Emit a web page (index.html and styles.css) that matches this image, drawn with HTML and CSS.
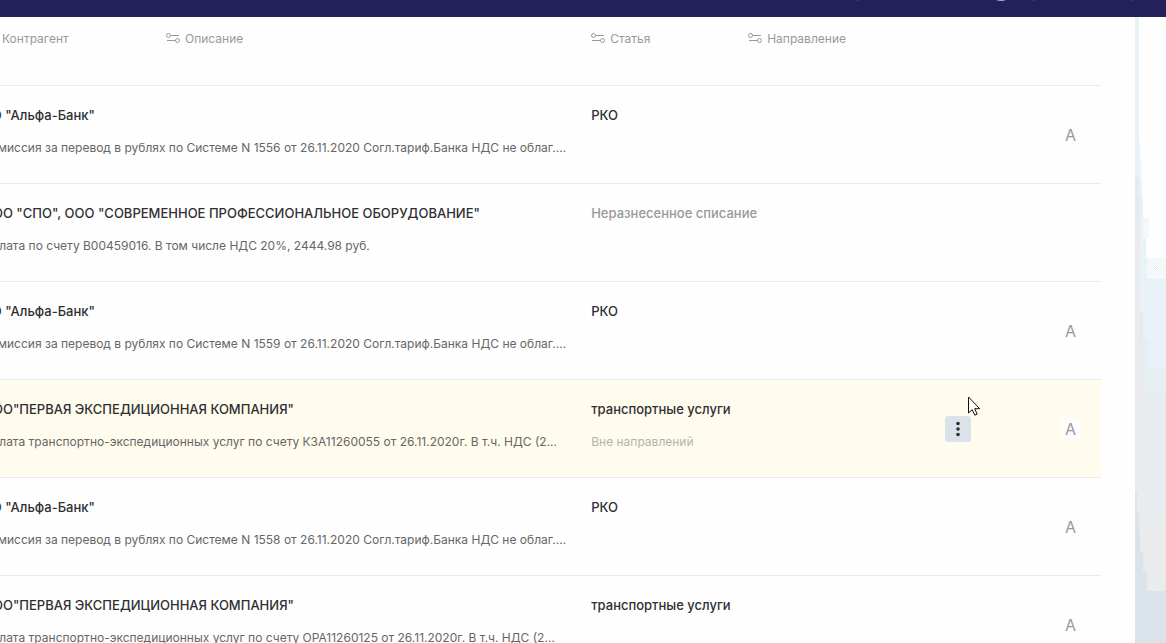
FILE: index.html
```html
<!DOCTYPE html>
<html lang="ru">
<head>
  <meta charset="UTF-8" />
  <meta name="viewport" content="width=device-width, initial-scale=1.0"/>
  <title>Операции</title>
  <link rel="stylesheet" href="styles.css">
</head>
<body>
  <header class="topbar">
    <svg class="topbar-marks" width="276" height="1" viewBox="0 0 276 1" aria-hidden="true">
      <path d="M0 0h1v1H0zM176 0h1v1h-1zM274 0h1v1h-1z" fill="#54517f"/>
      <path d="M140 0h8v1h-8z" fill="#77759a"/>
      <path d="M142 0h4v1h-4z" fill="#a5a4b8"/>
    </svg>
  </header>

  <!-- Icon used in the column headings -->
  <svg class="sprite" aria-hidden="true">
    <symbol id="filter" viewBox="0 0 14 12">
      <g fill="none" stroke="#9a9a9a" stroke-width="1">
        <circle cx="2.5" cy="2.5" r="2"/>
        <path d="M4.5 2.5H13"/>
        <circle cx="11.5" cy="7.5" r="2"/>
        <path d="M1 7.5h8.5"/>
      </g>
    </symbol>
  </svg>

  <div class="page">
    <main class="panel">
      <table class="operations">
        <colgroup>
          <col class="col-party">
          <col class="col-article">
          <col class="col-menu">
          <col class="col-type">
        </colgroup>
        <thead>
          <tr>
            <th scope="col">
              <div class="headings headings-party">
                <span class="heading"><svg class="icon"><use href="#filter"/></svg>Контрагент</span>
                <span class="heading"><svg class="icon"><use href="#filter"/></svg>Описание</span>
              </div>
            </th>
            <th scope="col">
              <div class="headings headings-article">
                <span class="heading"><svg class="icon"><use href="#filter"/></svg>Статья</span>
                <span class="heading"><svg class="icon"><use href="#filter"/></svg>Направление</span>
              </div>
            </th>
            <td></td>
            <td></td>
          </tr>
        </thead>
        <tbody>
          <tr>
            <td>
              <div class="name">АО "Альфа-Банк"</div>
              <div class="note">Комиссия за перевод в рублях по Системе N 1556 от 26.11.2020 Согл.тариф.Банка НДС не облаг.…</div>
            </td>
            <td><div class="name">РКО</div></td>
            <td></td>
            <td class="type"><span class="badge">А</span></td>
          </tr>
          <tr>
            <td>
              <div class="name">ООО "СПО", ООО "СОВРЕМЕННОЕ ПРОФЕССИОНАЛЬНОЕ ОБОРУДОВАНИЕ"</div>
              <div class="note">Оплата по счету В00459016. В том числе НДС 20%, 2444.98 руб.</div>
            </td>
            <td><div class="name name-empty">Неразнесенное списание</div></td>
            <td></td>
            <td></td>
          </tr>
          <tr>
            <td>
              <div class="name">АО "Альфа-Банк"</div>
              <div class="note">Комиссия за перевод в рублях по Системе N 1559 от 26.11.2020 Согл.тариф.Банка НДС не облаг.…</div>
            </td>
            <td><div class="name">РКО</div></td>
            <td></td>
            <td class="type"><span class="badge">А</span></td>
          </tr>
          <tr class="active">
            <td>
              <div class="name">ООО"ПЕРВАЯ ЭКСПЕДИЦИОННАЯ КОМПАНИЯ"</div>
              <div class="note">Оплата транспортно-экспедиционных услуг по счету КЗА11260055 от 26.11.2020г. В т.ч. НДС (2…</div>
            </td>
            <td>
              <div class="name">транспортные услуги</div>
              <div class="note note-empty">Вне направлений</div>
            </td>
            <td class="menu">
              <div class="menu-box">
                <button type="button" class="menu-btn" aria-label="Действия">
                  <svg width="4" height="16" viewBox="0 0 4 16" fill="#2f2f33">
                    <circle cx="2" cy="2.5" r="1.8"/>
                    <circle cx="2" cy="8" r="1.8"/>
                    <circle cx="2" cy="13.5" r="1.8"/>
                  </svg>
                </button>
                <svg class="cursor" width="13" height="20" viewBox="0 0 13 20" aria-hidden="true">
                  <path d="M.5 1v16l3.7-3.4 2.6 5.6 2.4-1-2.5-5.5h5z" fill="#fff" stroke="#111" stroke-width="1"/>
                </svg>
              </div>
            </td>
            <td class="type"><span class="badge">А</span></td>
          </tr>
          <tr>
            <td>
              <div class="name">АО "Альфа-Банк"</div>
              <div class="note">Комиссия за перевод в рублях по Системе N 1558 от 26.11.2020 Согл.тариф.Банка НДС не облаг.…</div>
            </td>
            <td><div class="name">РКО</div></td>
            <td></td>
            <td class="type"><span class="badge">А</span></td>
          </tr>
          <tr>
            <td>
              <div class="name">ООО"ПЕРВАЯ ЭКСПЕДИЦИОННАЯ КОМПАНИЯ"</div>
              <div class="note">Оплата транспортно-экспедиционных услуг по счету ОРА11260125 от 26.11.2020г. В т.ч. НДС (2…</div>
            </td>
            <td><div class="name">транспортные услуги</div></td>
            <td></td>
            <td class="type"><span class="badge">А</span></td>
          </tr>
        </tbody>
      </table>
    </main>

    <!-- Background picture showing beside the panel -->
    <aside class="backdrop" aria-hidden="true">
      <svg viewBox="0 0 31 626" preserveAspectRatio="none" shape-rendering="crispEdges">
        <defs>
          <pattern id="dots" width="2" height="2" patternUnits="userSpaceOnUse">
            <path d="M0 0h1v1H0zM1 1h1v1H1z" fill="#e9f2f6"/>
          </pattern>
          <pattern id="dots2" width="2" height="2" patternUnits="userSpaceOnUse">
            <path d="M0 0h1v1H0zM1 1h1v1H1z" fill="#e6ebf0"/>
          </pattern>
        </defs>
        <path d="M0 0H4V125H5V143H7V181H8V221H11V241H31V626H0z" fill="#e9f2f6"/>
        <path d="M5 143h2v20H5zM8 201h6v20H8zM12 241h19v20H12z" fill="#fefefe"/>
        <path d="M1 4h3v60H1zM5 143h2v20H5zM8 201h6v20H8zM12 241h19v19H12z" fill="url(#dots)"/>
        <path d="M0 160H4V180H5V294H8V376H31V626H0z" fill="#e6ebf0"/>
        <path d="M8 322h6v54H8zM14 350h17v26H14z" fill="#e9f2f6"/>
        <path d="M8 322h6v54H8zM14 350h17v26H14z" fill="url(#dots2)"/>
        <path d="M0 210H4V235H5V360H7V440H9V480H13V501H31V626H0z" fill="#eaebed"/>
        <path d="M0 476H2V495H4V514H5V535H8V555H12V574H31V626H0z" fill="#dbe3ea"/>
      </svg>
    </aside>
  </div>
</body>
</html>
```

FILE: styles.css
```css
:root {
  --bar-color: #24205a;
  --page-color: #fefefe;
  --line-color: #e8ebea;
  --active-color: #fffcee;
  --text-color: #2f2f33;
  --note-color: #666666;
  --muted-color: #999999;
}

* {
  box-sizing: border-box;
}

body {
  margin: 0;
  height: 100vh;
  overflow: hidden;
  display: flex;
  flex-direction: column;
  background-color: var(--page-color);
  color: var(--text-color);
  font-family: Inter, Roboto, sans-serif;
  font-size: 12px;
  line-height: 20px;
}

.topbar {
  flex: none;
  display: flex;
  justify-content: flex-end;
  height: 17px;
  padding-right: 33px;
  background-color: var(--bar-color);
}

.sprite {
  display: none;
}

.page {
  flex: 1;
  min-height: 0;
  display: flex;
}

/* the table is scrolled a little to the right */
.panel {
  flex: 1;
  min-width: 0;
  margin-left: -17px;
  padding-right: 34px;
}

.backdrop {
  flex: none;
  width: 31px;
}

.backdrop svg {
  display: block;
  width: 100%;
  height: 100%;
}

.operations {
  width: 100%;
  table-layout: fixed;
  border-collapse: separate;
  border-spacing: 0;
}

.col-party {
  width: 54.4%;
}

.col-menu {
  width: 26px;
}

.col-type {
  width: 130px;
}

th,
td {
  padding: 0;
  text-align: left;
  vertical-align: top;
  border-bottom: 1px solid var(--line-color);
}

th {
  height: 69px;
  padding-top: 12px;
  font-weight: 400;
  color: var(--muted-color);
}

.headings {
  display: grid;
}

.headings-party {
  grid-template-columns: 183px 1fr;
}

.headings-article {
  grid-template-columns: 157px 1fr;
}

.heading {
  display: flex;
  align-items: center;
  gap: 5px;
}

.icon {
  width: 14px;
  height: 12px;
}

tbody td {
  height: 98px;
  padding-top: 19px;
  white-space: nowrap;
}

.active td {
  background-color: var(--active-color);
}

.name {
  font-size: 13px;
  font-weight: 500;
}

.name-empty {
  color: var(--muted-color);
}

.note {
  margin-top: 13px;
  color: var(--note-color);
}

.note-empty {
  color: #b3b3ae;
}

tbody .menu,
tbody .type {
  padding-top: 0;
  vertical-align: middle;
}

.menu-box {
  position: relative;
}

.menu-btn {
  display: flex;
  align-items: center;
  justify-content: center;
  width: 26px;
  height: 26px;
  padding: 0;
  border: none;
  border-radius: 3px;
  background-color: #dbe2e9;
  cursor: pointer;
}

.cursor {
  position: absolute;
  left: 23px;
  top: -20px;
}

tbody .type {
  padding-right: 21px;
}

.badge {
  display: block;
  width: 19px;
  height: 19px;
  margin-left: auto;
  line-height: 20px;
  text-align: center;
  font-size: 16px;
  color: var(--muted-color);
  background-color: var(--page-color);
}
```
